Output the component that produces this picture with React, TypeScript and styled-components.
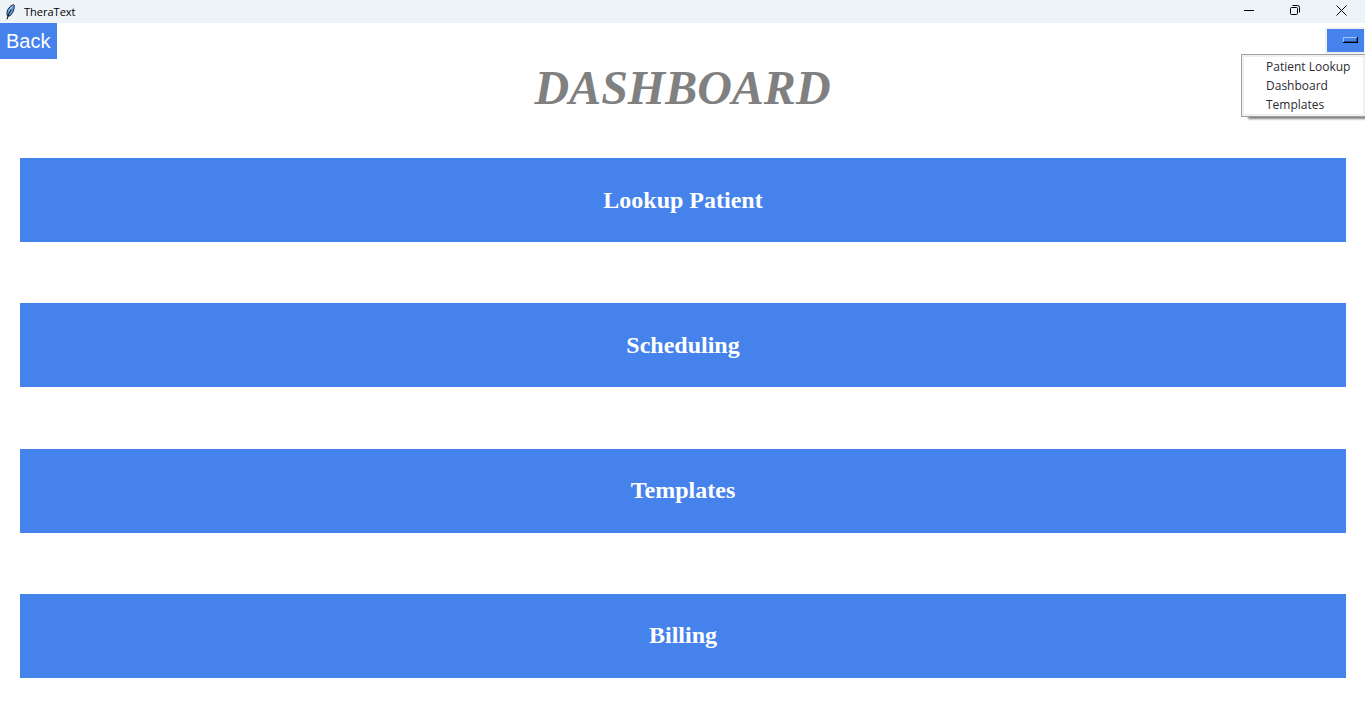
import React from 'react';
import styled, { createGlobalStyle } from 'styled-components';

const GlobalStyle = createGlobalStyle`
  * { box-sizing: border-box; }
  body { margin: 0; background: #ffffff; }
`;

const Window = styled.div`
  display: flex;
  flex-direction: column;
  min-height: 100vh;
`;

const TitleBar = styled.header`
  display: flex;
  align-items: center;
  height: 23px;
  padding: 0 1px 0 4px;
  background: #eef3f8;
  color: #000000;
  font: 11px 'Open Sans', sans-serif;
`;

const AppName = styled.span`
  flex: 1;
  padding-left: 8px;
`;

const Controls = styled.div`
  display: flex;
  align-self: stretch;
`;

const ControlButton = styled.button`
  display: flex;
  align-items: center;
  justify-content: center;
  width: 46px;
  padding: 0 0 2px;
  border: 0;
  background: transparent;
`;

const Toolbar = styled.nav`
  display: flex;
  justify-content: space-between;
  align-items: flex-start;
  height: 36px;
`;

const BackButton = styled.button`
  height: 36px;
  padding: 0 7px 0 6px;
  border: 0;
  background: #4682eb;
  color: #ffffff;
  font: 20px 'Liberation Sans', Arial, sans-serif;
`;

const MenuArea = styled.div`
  position: relative;
  padding-top: 4px;
`;

const MenuButton = styled.button`
  display: flex;
  align-items: center;
  justify-content: flex-end;
  width: 40px;
  height: 27px;
  padding: 0 6px 2px 0;
  border: 2px solid #f0f0f0;
  border-right-width: 1px;
  background: #4682eb;
`;

const Menu = styled.ul`
  position: absolute;
  top: 31px;
  right: 0;
  width: 124px;
  height: 63px;
  margin: 0;
  padding: 2px 0;
  list-style: none;
  background: #ffffff;
  border: 1px solid #a0a0a0;
  border-right: 0;
  box-shadow: inset 0 0 0 2px #f0f0f0, 6px 3px 2px -1px #808080;
`;

const MenuItem = styled.button`
  display: block;
  width: 100%;
  height: 19px;
  padding: 0 0 0 24px;
  border: 0;
  background: transparent;
  color: #2b2b33;
  text-align: left;
  white-space: nowrap;
  font: 12px/19px 'Open Sans', sans-serif;
`;

const Heading = styled.h1`
  margin: 0;
  color: #808080;
  text-align: center;
  font: italic bold 48px/58px 'Liberation Serif', 'Times New Roman', serif;
`;

const Actions = styled.main`
  display: flex;
  flex: 1;
  flex-direction: column;
  justify-content: space-between;
  gap: 20px;
  padding: 41px 19px 39px 20px;
`;

const ActionButton = styled.button`
  height: 84px;
  padding: 0;
  border: 0;
  background: #4682eb;
  color: #ffffff;
  font: bold 24px 'Liberation Serif', 'Times New Roman', serif;
`;

const Feather = () => (
  <svg width="12" height="18" viewBox="0 0 12 18" aria-hidden="true">
    <path d="M9.5 1.5 10.3 2.3 10 6 8.7 9.5 6.5 12.5 3.6 13.3 2.9 11 3.5 7 6 3.6Z" fill="#58a0e8" stroke="#111820" strokeWidth="0.9" />
    <path d="M7.2 6.5 5 10.5 3 16.3" fill="none" stroke="#0a0a0a" strokeWidth="1" />
    <path d="M8.6 3 4.6 8.3" stroke="#a4cdf7" strokeWidth="1" />
  </svg>
);

const Minimize = () => (
  <svg width="11" height="11" viewBox="0 0 11 11" aria-hidden="true">
    <path d="M0 5.5h10" stroke="#000" />
  </svg>
);

const Restore = () => (
  <svg width="11" height="11" viewBox="0 0 11 11" fill="none" stroke="#000" aria-hidden="true">
    <rect x="0.5" y="2.5" width="7" height="7" rx="1" />
    <path d="M2.5 0.5H7.5Q9.5 0.5 9.5 2.5V7.5" />
  </svg>
);

const Close = () => (
  <svg width="11" height="11" viewBox="0 0 11 11" aria-hidden="true">
    <path d="M0.5 0.5 10.5 10.5M10.5 0.5 0.5 10.5" stroke="#000" strokeWidth="1" />
  </svg>
);

const MenuIndicator = () => (
  <svg width="15" height="6" viewBox="0 0 15 6" shapeRendering="crispEdges" aria-hidden="true">
    <path d="M0 0H15V6H0Z" fill="#000" />
    <path d="M0 0H14V5H0Z" fill="#a3c4ff" />
    <path d="M1 1H14V5H1Z" fill="#2a4e8d" />
    <path d="M1 1H13V4H1Z" fill="#4682eb" />
    <path d="M0 5H15V6H0ZM14 0H15V6H14Z" fill="#000" />
  </svg>
);

const actions = ['Lookup Patient', 'Scheduling', 'Templates', 'Billing'];
const menuItems = ['Patient Lookup', 'Dashboard', 'Templates'];

export default function App() {
  return (
    <Window>
      <GlobalStyle />
      <TitleBar>
        <Feather />
        <AppName>TheraText</AppName>
        <Controls>
          <ControlButton aria-label="Minimize"><Minimize /></ControlButton>
          <ControlButton aria-label="Restore"><Restore /></ControlButton>
          <ControlButton aria-label="Close"><Close /></ControlButton>
        </Controls>
      </TitleBar>
      <Toolbar>
        <BackButton>Back</BackButton>
        <MenuArea>
          <MenuButton aria-label="Menu" aria-expanded="true"><MenuIndicator /></MenuButton>
          <Menu>
            {menuItems.map((item) => (
              <li key={item}><MenuItem>{item}</MenuItem></li>
            ))}
          </Menu>
        </MenuArea>
      </Toolbar>
      <Heading>DASHBOARD</Heading>
      <Actions>
        {actions.map((action) => (
          <ActionButton key={action}>{action}</ActionButton>
        ))}
      </Actions>
    </Window>
  );
}
